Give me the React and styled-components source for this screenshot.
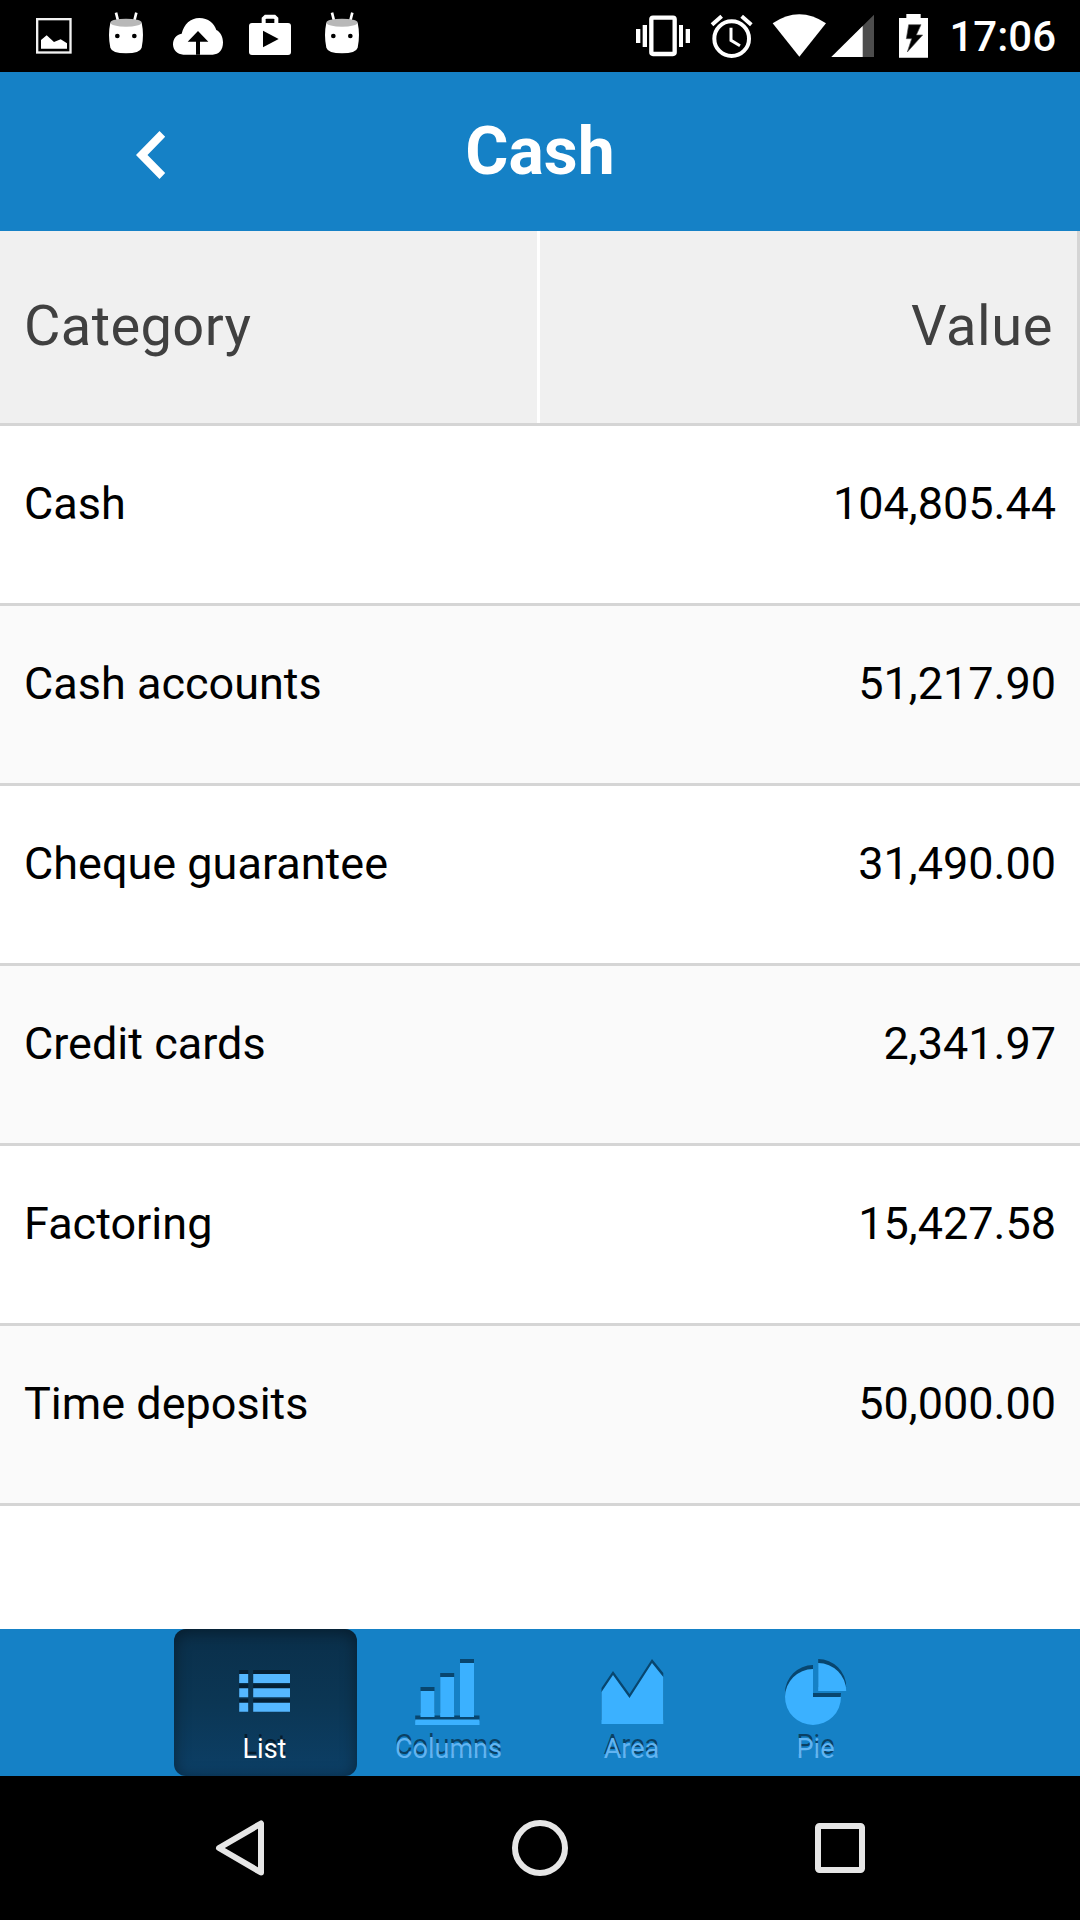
import React from 'react'
import styled, { createGlobalStyle } from 'styled-components'

const blue = '#1581c6'
const iconBlue = '#3bb1ff'
const border = '#d5d5d5'

const GlobalStyle = createGlobalStyle`
  body {
    margin: 0;
    background: #fff;
    font-family: Roboto, 'Liberation Sans', sans-serif;
  }
  svg {
    display: block;
    flex: none;
  }
`

const Screen = styled.div`
  display: flex;
  flex-direction: column;
  width: 1080px;
  height: 1920px;
  overflow: hidden;
`

const StatusBar = styled.div`
  display: flex;
  justify-content: space-between;
  height: 72px;
  padding: 0 24px 0 18px;
  background: #000;
  color: #fff;
`

const StatusGroup = styled.div`
  display: flex;
  align-items: center;
`

const Clock = styled.span`
  width: 118px;
  padding-top: 2px;
  font-size: 42px;
  font-weight: 500;
  line-height: 72px;
  text-align: right;
`

const Header = styled.header`
  display: grid;
  grid-template-columns: 300px 1fr 300px;
  height: 159px;
  background: ${blue};
  color: #fff;
`

const BackButton = styled.button`
  display: flex;
  align-items: center;
  justify-content: center;
  height: 166px;
  padding: 0 0 0 1px;
  border: 0;
  background: none;
`

const Title = styled.h1`
  margin: 0;
  font-size: 66px;
  font-weight: 700;
  line-height: 160px;
  text-align: center;
`

const Table = styled.div`
  flex: 1;
  background: #fff;
`

const Row = styled.div`
  display: grid;
  grid-template-columns: 540px 540px;
  box-sizing: border-box;
  height: 180px;
  border-bottom: 3px solid ${border};
  background: ${props => (props.$odd ? '#fafafa' : '#fff')};
`

const HeadRow = styled(Row)`
  height: 195px;
  background: #f0f0f0;
`

const Cell = styled.div`
  box-sizing: border-box;
  padding: 0 24px;
  color: #000;
  font-size: 45px;
  line-height: 155px;
  text-align: ${props => (props.$right ? 'right' : 'left')};
`

const HeadCell = styled(Cell)`
  border-right: 3px solid ${props => (props.$right ? border : '#fff')};
  color: #404040;
  font-size: 56px;
  line-height: 190px;
  letter-spacing: ${props => (props.$right ? '0.6px' : '0.4px')};
`

const TabBar = styled.nav`
  display: flex;
  justify-content: center;
  height: 147px;
  background: ${blue};
`

const TabButton = styled.button`
  display: flex;
  flex-direction: column;
  align-items: center;
  box-sizing: border-box;
  width: 183px;
  height: 147px;
  padding: 25px 0 0;
  border: 0;
  border-radius: 12px;
  background: ${props =>
    props.$active ? 'linear-gradient(#0a2f4a, #0b3654 50%, #0c3f66)' : 'none'};
  box-shadow: ${props =>
    props.$active ? 'inset 0 3px 16px rgba(0, 0, 0, 0.4)' : 'none'};
  color: ${props => (props.$active ? '#fff' : '#62b4f1')};
  font-family: inherit;
  &:first-child {
    padding-right: 2px;
  }
  &:last-child {
    padding-left: 2px;
  }
`

const TabSvg = styled.svg`
  overflow: visible;
`

const TabLabel = styled.span`
  margin-top: 3px;
  font-size: 27px;
  line-height: 36px;
  text-shadow: 0 -4px 0 rgba(0, 0, 0, 0.5);
`

const SystemNav = styled.div`
  display: flex;
  align-items: center;
  justify-content: center;
  gap: 228px;
  height: 144px;
  background: #000;
`

const AndroidIcon = () => (
  <svg width="72" height="72" viewBox="270 0 216 216">
    <path
      d="M348 38l7 28M409 38l-7 28"
      stroke="#fff"
      strokeWidth="8"
    />
    <path
      d="M331 68Q378 84 425 68Q433 105 425 143Q420 160 378 160T331 143Q323 105 331 68Z"
      fill="#fff"
    />
    <ellipse cx="378" cy="68" rx="47" ry="12" fill="#b8b8b8" />
    <circle cx="352" cy="108" r="7" />
    <circle cx="403" cy="108" r="7" />
  </svg>
)

const PictureIcon = () => (
  <svg width="72" height="72" viewBox="54 0 216 216">
    <rect
      x="111.5"
      y="57.5"
      width="100"
      height="100"
      fill="none"
      stroke="#f2f2f2"
      strokeWidth="7"
    />
    <path d="M123 146V120L140 106L162 126L182 118L201 130V146Z" fill="#fff" />
  </svg>
)

const CloudIcon = () => (
  <svg width="72" height="72" viewBox="486 0 216 216">
    <path
      d="M550 164C532 164 519 150 519 133C519 116 529 104 545 101C552 73 571 54 598 54C625 54 642 70 649 90C661 96 669 110 669 127C669 150 657 164 638 164Z"
      fill="#fff"
    />
    <path d="M594 93L625 125H600V164H588V125H563Z" />
  </svg>
)

const StoreIcon = () => (
  <svg width="72" height="72" viewBox="702 0 216 216">
    <path
      d="M791 72V56L797 50H823L829 56V72"
      fill="none"
      stroke="#fff"
      strokeWidth="12"
    />
    <rect x="747" y="69" width="126" height="96" rx="9" fill="#fff" />
    <path d="M789 92L836 117L789 142Z" />
  </svg>
)

const VibrateIcon = () => (
  <svg width="66" height="72" viewBox="36 0 198 216">
    <path
      d="M48 87h13v42h-13zM68 75h13v66h-13zM177 75h12v66h-12zM197 87h13v42h-13z"
      fill="#fff"
    />
    <rect
      x="94"
      y="53"
      width="70"
      height="109"
      rx="5"
      fill="none"
      stroke="#fff"
      strokeWidth="13"
    />
  </svg>
)

const AlarmIcon = () => (
  <svg width="66" height="72" viewBox="234 0 198 216">
    <g fill="none" stroke="#fff">
      <circle cx="335" cy="116" r="52" strokeWidth="12" />
      <path d="M333 83V121L360 137" strokeWidth="9" />
      <path d="M276 74L305 49M365 49L394 74" strokeWidth="12" />
    </g>
  </svg>
)

const WifiIcon = () => (
  <svg width="66" height="72" viewBox="432 0 198 216">
    <path d="M458 70Q538 16 618 70L538 170Z" fill="#fff" />
  </svg>
)

const SignalIcon = () => (
  <svg width="66" height="72" viewBox="630 0 198 216">
    <path d="M634 171L762 44V171Z" fill="#4d4d4d" />
    <path d="M634 171L728 78V171Z" fill="#fff" />
  </svg>
)

const BatteryIcon = () => (
  <svg width="42" height="72" viewBox="828 0 126 216">
    <path d="M837 54H859V42H902V54H924V173H837Z" fill="#fff" />
    <path
      d="M866 74H903L889 105H908L862 156L875 116H859Z"
      stroke="#555"
      strokeWidth="2"
    />
  </svg>
)

const BackIcon = () => (
  <svg width="30" height="48" viewBox="0 0 30 48">
    <path d="M23.5 0L29.2 5.7L11.5 24L29.2 42L23.5 48L0 24Z" fill="#fff" />
  </svg>
)

// the shape is repeated 4px higher in a dark tone for the engraved look
const TabIcon = ({ shape, fill = iconBlue, shade = '#08466f' }) => (
  <TabSvg width="66" height="74" viewBox="0 0 66 74">
    <path d={shape} fill={shade} transform="translate(0 -4)" />
    <path d={shape} fill={fill} />
  </TabSvg>
)

const tabs = [
  {
    name: 'List',
    active: true,
    fill: '#55b7ff',
    shade: '#051f33',
    shape:
      'M7.2 20h9v9h-9zM21.2 20h36.8v9h-36.8zM7.2 34.3h9v9h-9zM21.2 34.3h36.8v9h-36.8zM7.2 48.7h9v9h-9zM21.2 48.7h36.8v9h-36.8z',
  },
  {
    name: 'Columns',
    shape:
      'M4.5 37h14v26h-14zM24.2 23h14v40h-14zM44 9h14v54h-14zM-0.8 65.5h64.3v5.5h-64.3z',
  },
  {
    name: 'Area',
    shape: 'M2.5 38L14 21L30.5 44L53 9L64.3 23V70H2.5Z',
  },
  {
    name: 'Pie',
    shape: 'M30 15V43H58A28 28 0 1 1 30 15ZM35.2 9A28 28 0 0 1 63.2 37H35.2Z',
  },
]

const rows = [
  { category: 'Cash', value: '104,805.44' },
  { category: 'Cash accounts', value: '51,217.90' },
  { category: 'Cheque guarantee', value: '31,490.00' },
  { category: 'Credit cards', value: '2,341.97' },
  { category: 'Factoring', value: '15,427.58' },
  { category: 'Time deposits', value: '50,000.00' },
]

const App = () => (
  <Screen>
    <GlobalStyle />
    <StatusBar>
      <StatusGroup>
        <PictureIcon />
        <AndroidIcon />
        <CloudIcon />
        <StoreIcon />
        <AndroidIcon />
      </StatusGroup>
      <StatusGroup>
        <VibrateIcon />
        <AlarmIcon />
        <WifiIcon />
        <SignalIcon />
        <BatteryIcon />
        <Clock>17:06</Clock>
      </StatusGroup>
    </StatusBar>
    <Header>
      <BackButton aria-label="Back">
        <BackIcon />
      </BackButton>
      <Title>Cash</Title>
    </Header>
    <Table>
      <HeadRow>
        <HeadCell>Category</HeadCell>
        <HeadCell $right>Value</HeadCell>
      </HeadRow>
      {rows.map((row, i) => (
        <Row key={row.category} $odd={i % 2 === 1}>
          <Cell>{row.category}</Cell>
          <Cell $right>{row.value}</Cell>
        </Row>
      ))}
    </Table>
    <TabBar>
      {tabs.map(tab => (
        <TabButton key={tab.name} $active={tab.active}>
          <TabIcon shape={tab.shape} fill={tab.fill} shade={tab.shade} />
          <TabLabel>{tab.name}</TabLabel>
        </TabButton>
      ))}
    </TabBar>
    <SystemNav>
      <svg width="72" height="72" viewBox="0 0 72 72">
        <path
          d="M57 11.5V60.5L15 36Z"
          fill="none"
          stroke="#e6e6e6"
          strokeWidth="6"
          strokeLinejoin="round"
        />
      </svg>
      <svg width="72" height="72" viewBox="0 0 72 72">
        <circle
          cx="36"
          cy="36"
          r="25"
          fill="none"
          stroke="#e6e6e6"
          strokeWidth="6"
        />
      </svg>
      <svg width="72" height="72" viewBox="0 0 72 72">
        <rect
          x="14"
          y="14"
          width="44"
          height="44"
          rx="1.5"
          fill="none"
          stroke="#e6e6e6"
          strokeWidth="6"
        />
      </svg>
    </SystemNav>
  </Screen>
)

export default App
